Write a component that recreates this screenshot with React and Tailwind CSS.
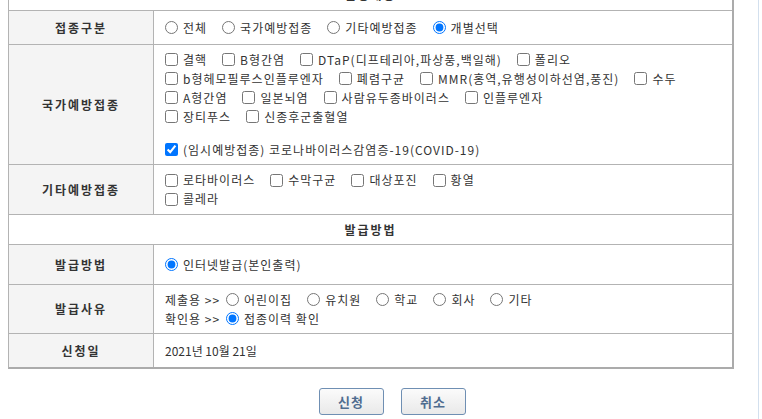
import React from "react";

const font = { fontFamily: '"Noto Sans CJK KR", "Liberation Sans", sans-serif' };

function Check({ label, checked }) {
  return (
    <label className="flex items-center whitespace-nowrap">
      <input type="checkbox" defaultChecked={checked} className="m-0 w-[13px] h-[13px]" />
      <span className="ml-[5px]">{label}</span>
    </label>
  );
}

function Radio({ label, name, checked }) {
  return (
    <label className="flex items-center whitespace-nowrap">
      <input type="radio" name={name} defaultChecked={checked} className="m-0 w-[13px] h-[13px]" />
      <span className="ml-[5px]">{label}</span>
    </label>
  );
}

function Row({ label, h, children, valueClass = "" }) {
  return (
    <div className={`flex border-t border-[#b3b3b3] ${h}`}>
      <div className="w-[145px] shrink-0 bg-[#f4f4f4] border-r border-[#b3b3b3] flex items-center justify-center font-bold text-[#333] tracking-[2px]">
        {label}
      </div>
      <div className={`flex-1 pl-[11px] ${valueClass}`}>{children}</div>
    </div>
  );
}

function Line({ children }) {
  return <div className="flex items-center gap-x-[15px] h-[19px]">{children}</div>;
}

export default function App() {
  return (
    <div
      className="w-[759px] h-[419px] overflow-hidden border-r border-[#d3e0ee] bg-white text-[12px] text-[#333] tracking-[1px]"
      style={font}
    >
      <div className="ml-[8px] w-[726px] -mt-[21px] border-l border-t border-r-2 border-b-2 border-[#ababab] border-l-[#b3b3b3]">
        <div className="h-[30px] flex items-center justify-center font-bold tracking-[2px]">신청내용</div>

        <Row label="접종구분" h="h-[34px]" valueClass="flex items-center gap-x-[15px]">
          <Radio name="kind" label="전체" />
          <Radio name="kind" label="국가예방접종" />
          <Radio name="kind" label="기타예방접종" />
          <Radio name="kind" label="개별선택" checked />
        </Row>

        <Row label="국가예방접종" h="h-[120px]" valueClass="pt-[5px]">
          <Line>
            <Check label="결핵" />
            <Check label="B형간염" />
            <Check label="DTaP(디프테리아,파상풍,백일해)" />
            <Check label="폴리오" />
          </Line>
          <Line>
            <Check label="b형헤모필루스인플루엔자" />
            <Check label="폐렴구균" />
            <Check label="MMR(홍역,유행성이하선염,풍진)" />
            <Check label="수두" />
          </Line>
          <Line>
            <Check label="A형간염" />
            <Check label="일본뇌염" />
            <Check label="사람유두종바이러스" />
            <Check label="인플루엔자" />
          </Line>
          <Line>
            <Check label="장티푸스" />
            <Check label="신종후군출혈열" />
          </Line>
          <div className="mt-[14px]">
            <Line>
              <Check label="(임시예방접종) 코로나바이러스감염증-19(COVID-19)" checked />
            </Line>
          </div>
        </Row>

        <Row label="기타예방접종" h="h-[50px]" valueClass="flex flex-col justify-center">
          <Line>
            <Check label="로타바이러스" />
            <Check label="수막구균" />
            <Check label="대상포진" />
            <Check label="황열" />
          </Line>
          <Line>
            <Check label="콜레라" />
          </Line>
        </Row>

        <div className="h-[30px] border-t border-[#b3b3b3] flex items-center justify-center font-bold tracking-[2px]">
          발급방법
        </div>

        <Row label="발급방법" h="h-[40px]" valueClass="flex items-center">
          <Radio name="method" label="인터넷발급(본인출력)" checked />
        </Row>

        <Row label="발급사유" h="h-[49px]" valueClass="flex flex-col justify-center">
          <div className="flex items-center h-[19px]">
            <span className="w-[61px]">제출용 &gt;&gt;</span>
            <div className="flex items-center gap-x-[15px]">
              <Radio name="reason" label="어린이집" />
              <Radio name="reason" label="유치원" />
              <Radio name="reason" label="학교" />
              <Radio name="reason" label="회사" />
              <Radio name="reason" label="기타" />
            </div>
          </div>
          <div className="flex items-center h-[19px]">
            <span className="w-[61px]">확인용 &gt;&gt;</span>
            <Radio name="reason" label="접종이력 확인" checked />
          </div>
        </Row>

        <Row label="신청일" h="h-[34px]" valueClass="flex items-center tracking-normal">
          2021년 10월 21일
        </Row>
      </div>

      <div className="flex justify-center gap-x-[17px] pl-[26px] mt-[19px]">
        <button className="w-[65px] h-[27px] rounded-[3px] border border-[#6f8fb3] bg-gradient-to-b from-[#fbfbfb] to-[#e9e9e9] font-bold text-[13px] text-[#4f6c8f] tracking-[1px]">
          신청
        </button>
        <button className="w-[65px] h-[27px] rounded-[3px] border border-[#6f8fb3] bg-gradient-to-b from-[#fbfbfb] to-[#e9e9e9] font-bold text-[13px] text-[#4f6c8f] tracking-[1px]">
          취소
        </button>
      </div>
    </div>
  );
}
